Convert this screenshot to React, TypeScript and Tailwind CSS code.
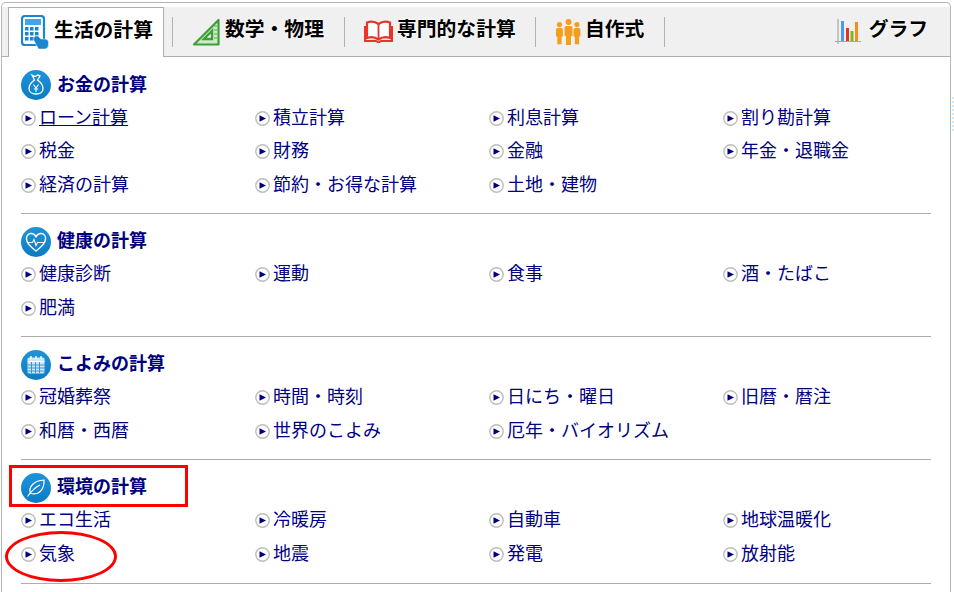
import React from 'react';

const jp = "font-['Liberation_Sans','Noto_Sans_CJK_JP',sans-serif]";

function Calc() {
  return (
    <svg width="28" height="34" viewBox="0 0 28 34" className="shrink-0">
      <rect x="1" y="1" width="22" height="29" rx="3" fill="#fff" stroke="#1a86d0" strokeWidth="2.200" />
      <rect x="4" y="4" width="16" height="6" fill="#4aa3e0" />
      {[4, 9, 14].map((x) =>
        [12, 17, 22].map((y) => <rect key={x + '-' + y} x={x} y={y} width="3.500" height="3.500" fill="#1a86d0" />),
      )}
      <path d="M12 24l2-3h3l3 3h4a3.500 3.500 0 0 1 3.500 3.500V30a4 4 0 0 1-4 4h-6z" fill="#1a86d0" stroke="#fff" strokeWidth="0.500" />
    </svg>
  );
}

function SetSquare() {
  return (
    <svg width="28" height="28" viewBox="0 0 28 28" className="shrink-0">
      <path d="M26.500 2v24.500H2z" fill="#cfe8ca" stroke="#3f9f37" strokeWidth="2.200" strokeLinejoin="round" />
      <path d="M20 13v8h-8z" fill="#fff" stroke="#3f9f37" strokeWidth="2.400" />
      <path d="M22 8h3M22 12h3M22 16h3M22 20h3" stroke="#3f9f37" strokeWidth="0.800" />
    </svg>
  );
}

function Book() {
  return (
    <svg width="29" height="23" viewBox="0 0 29 23" className="shrink-0">
      <path d="M14.500 4C11 1.500 6 1.500 3 2.500V18C6 17 11 17 14.500 19.500 18 17 23 17 26 18V2.500C23 1.500 18 1.500 14.500 4z" fill="#fff" stroke="#e8352b" strokeWidth="2.200" />
      <path d="M14.500 4v15.500" stroke="#e8352b" strokeWidth="1.800" />
      <path d="M1 6v15h11l2.500 1.500L17 21h11V6" fill="none" stroke="#e8352b" strokeWidth="2" />
    </svg>
  );
}

function People() {
  const man = (x: number, y: number, s: number) => (
    <g key={x} transform={`translate(${x} ${y}) scale(${s})`}>
      <circle cx="4" cy="3" r="3" fill="#f59d1d" />
      <path d="M0 9a2 2 0 0 1 2-2h4a2 2 0 0 1 2 2v8H6.500v9h-5v-9H0z" fill="#f59d1d" />
    </g>
  );
  return (
    <svg width="25" height="26" viewBox="0 0 25 26" className="shrink-0">
      {man(0, 3, 0.86)}
      {man(8.500, 0, 1)}
      {man(17.500, 3, 0.86)}
    </svg>
  );
}

function ChartIcon() {
  return (
    <svg width="26" height="27" viewBox="0 0 26 27" className="shrink-0">
      <path d="M3 1v25M0 23.500h26" stroke="#a8a8a8" strokeWidth="1.200" />
      <rect x="6" y="3" width="3" height="20" fill="#4a9bf0" />
      <rect x="11" y="10" width="3" height="13" fill="#e53228" />
      <rect x="15.500" y="13" width="3" height="10" fill="#78b81e" />
      <rect x="20" y="4" width="3" height="19" fill="#f58c1e" />
    </svg>
  );
}

function Circle({ children }: { children: React.ReactNode }) {
  return (
    <svg width="30" height="30" viewBox="0 0 30 30" className="shrink-0">
      <defs>
        <linearGradient id="blue" x1="0" y1="0" x2="0" y2="1">
          <stop offset="0" stopColor="#1f93da" />
          <stop offset="1" stopColor="#0b7cc3" />
        </linearGradient>
      </defs>
      <circle cx="15" cy="15" r="15" fill="url(#blue)" />
      {children}
    </svg>
  );
}

const moneyIcon = (
  <Circle>
    <path d="M11 5l3 1.500L17 5l2 1-2.500 4c3.500 2.500 5.500 5.500 5.500 8.500 0 3.500-3 5.500-7 5.500s-7-2-7-5.500c0-3 2-6 5.500-8.500z" fill="#1a86d0" stroke="#fff" strokeWidth="1.300" />
    <path d="M12.500 14.500l2.500 3.500 2.500-3.500M15 18v4M12.800 19h4.400" stroke="#fff" strokeWidth="1.100" fill="none" />
  </Circle>
);

const heartIcon = (
  <Circle>
    <path d="M15 24C9 19.500 5.500 16 5.500 12a4.800 4.800 0 0 1 9.500-1.500A4.800 4.800 0 0 1 24.500 12c0 4-3.500 7.500-9.500 12z" fill="none" stroke="#fff" strokeWidth="1.400" />
    <path d="M6.500 15.500h5l1.500-3 2 6 1.500-3h7" fill="none" stroke="#fff" strokeWidth="1.100" />
  </Circle>
);

const calendarIcon = (
  <Circle>
    <rect x="6.500" y="7.500" width="17" height="16" rx="1.500" fill="#cfe6f6" />
    <path d="M6.500 11.500h17" stroke="#fff" strokeWidth="1.200" />
    <path d="M10 6v3M15 6v3M20 6v3" stroke="#fff" strokeWidth="1.400" />
    <path d="M6.500 15h17M6.500 18h17M6.500 21h17M10.500 12v11M14.500 12v11M18.500 12v11" stroke="#2a8fd2" strokeWidth="0.900" />
  </Circle>
);

const leafIcon = (
  <Circle>
    <path d="M9.500 20.500C7 14 13 7.500 23 7c.5 9-4.500 15.500-13.500 13.500z" fill="none" stroke="#fff" strokeWidth="1.200" />
    <path d="M6.500 23.500C10 18.500 14 14.500 19 12" fill="none" stroke="#fff" strokeWidth="1.100" />
  </Circle>
);

function Bullet() {
  return (
    <svg width="15" height="15" viewBox="0 0 15 15" className="shrink-0">
      <circle cx="7.500" cy="7.500" r="6.700" fill="#fff" stroke="#bdbdbd" strokeWidth="1.400" />
      <path d="M4.500 4.200l6.500 3.300-6.500 3.300z" fill="#000080" />
    </svg>
  );
}

function Section({ icon, title, items }: { icon: React.ReactNode; title: string; items: string[] }) {
  return (
    <section className="border-b border-[#adadad] pt-[13px] pb-[10.75px] last:pb-[11.75px]">
      <div className="flex h-[30px] items-center gap-[6px]">
        {icon}
        <h2 className="text-[18px] font-bold text-[#000080]">{title}</h2>
      </div>
      <ul className="mt-[1.25px] grid grid-cols-[234px_234px_234px_1fr]">
        {items.map((item) => (
          <li key={item} className="flex h-[33.5px] items-center gap-[3px] text-[18px] text-[#000080]">
            <Bullet />
            <a className={item === 'ローン計算' ? 'underline' : ''}>{item}</a>
          </li>
        ))}
      </ul>
    </section>
  );
}

const tabText = 'pb-[3px] text-[19.8px] font-bold text-black [text-shadow:0_0_3px_#fff]';

export default function App() {
  return (
    <div className={`relative h-[592px] w-[954px] overflow-hidden bg-white ${jp}`}>
      <div className="ml-px mt-[2px] h-[640px] w-[950px] rounded-t-[5px] border border-b-0 border-[#b4b4b4]">
        {/* tabs */}
        <nav className="mt-[4px] flex h-[50px] items-center border-b border-[#adadad] bg-[#f0f0f0] pl-[6px]">
          <div className="flex h-[50px] w-[156px] items-center gap-[5px] border border-b-0 border-[#adadad] bg-white pl-[12px]">
            <Calc />
            <span className={tabText}>生活の計算</span>
          </div>
          <div className="ml-[8px] h-[30px] w-px bg-[#b4b4b4]" />
          <div className="flex w-[171px] items-center gap-[5px] pl-[19px]">
            <SetSquare />
            <span className={tabText}>数学・物理</span>
          </div>
          <div className="h-[30px] w-px bg-[#b4b4b4]" />
          <div className="flex w-[190px] items-center gap-[4px] pl-[19px]">
            <Book />
            <span className={tabText}>専門的な計算</span>
          </div>
          <div className="h-[30px] w-px bg-[#b4b4b4]" />
          <div className="flex w-[128px] items-center gap-[4px] pl-[20px]">
            <People />
            <span className={tabText}>自作式</span>
          </div>
          <div className="h-[30px] w-px bg-[#b4b4b4]" />
          <div className="ml-auto flex items-center gap-[8px] pr-[22px]">
            <ChartIcon />
            <span className={tabText}>グラフ</span>
          </div>
        </nav>

        <div className="ml-[19px] w-[910px]">
          <Section
            icon={moneyIcon}
            title="お金の計算"
            items={['ローン計算', '積立計算', '利息計算', '割り勘計算', '税金', '財務', '金融', '年金・退職金', '経済の計算', '節約・お得な計算', '土地・建物']}
          />
          <Section
            icon={heartIcon}
            title="健康の計算"
            items={['健康診断', '運動', '食事', '酒・たばこ', '肥満']}
          />
          <Section
            icon={calendarIcon}
            title="こよみの計算"
            items={['冠婚葬祭', '時間・時刻', '日にち・曜日', '旧暦・暦注', '和暦・西暦', '世界のこよみ', '厄年・バイオリズム']}
          />
          <Section
            icon={leafIcon}
            title="環境の計算"
            items={['エコ生活', '冷暖房', '自動車', '地球温暖化', '気象', '地震', '発電', '放射能']}
          />
        </div>
      </div>

      {/* faint dotted mark right of the card */}
      <div className="absolute left-[952px] top-[97px] h-[34px] w-[2px] border-l-2 border-dotted border-[#d3e6f7]" />

      {/* red annotations drawn over the page */}
      <div className="absolute left-[9px] top-[465px] h-[42px] w-[179px] border-[3px] border-[#ff0000]" />
      <div className="absolute left-[5px] top-[531px] h-[51px] w-[112px] rounded-[50%] border-[3px] border-[#ff0000]" />
    </div>
  );
}
